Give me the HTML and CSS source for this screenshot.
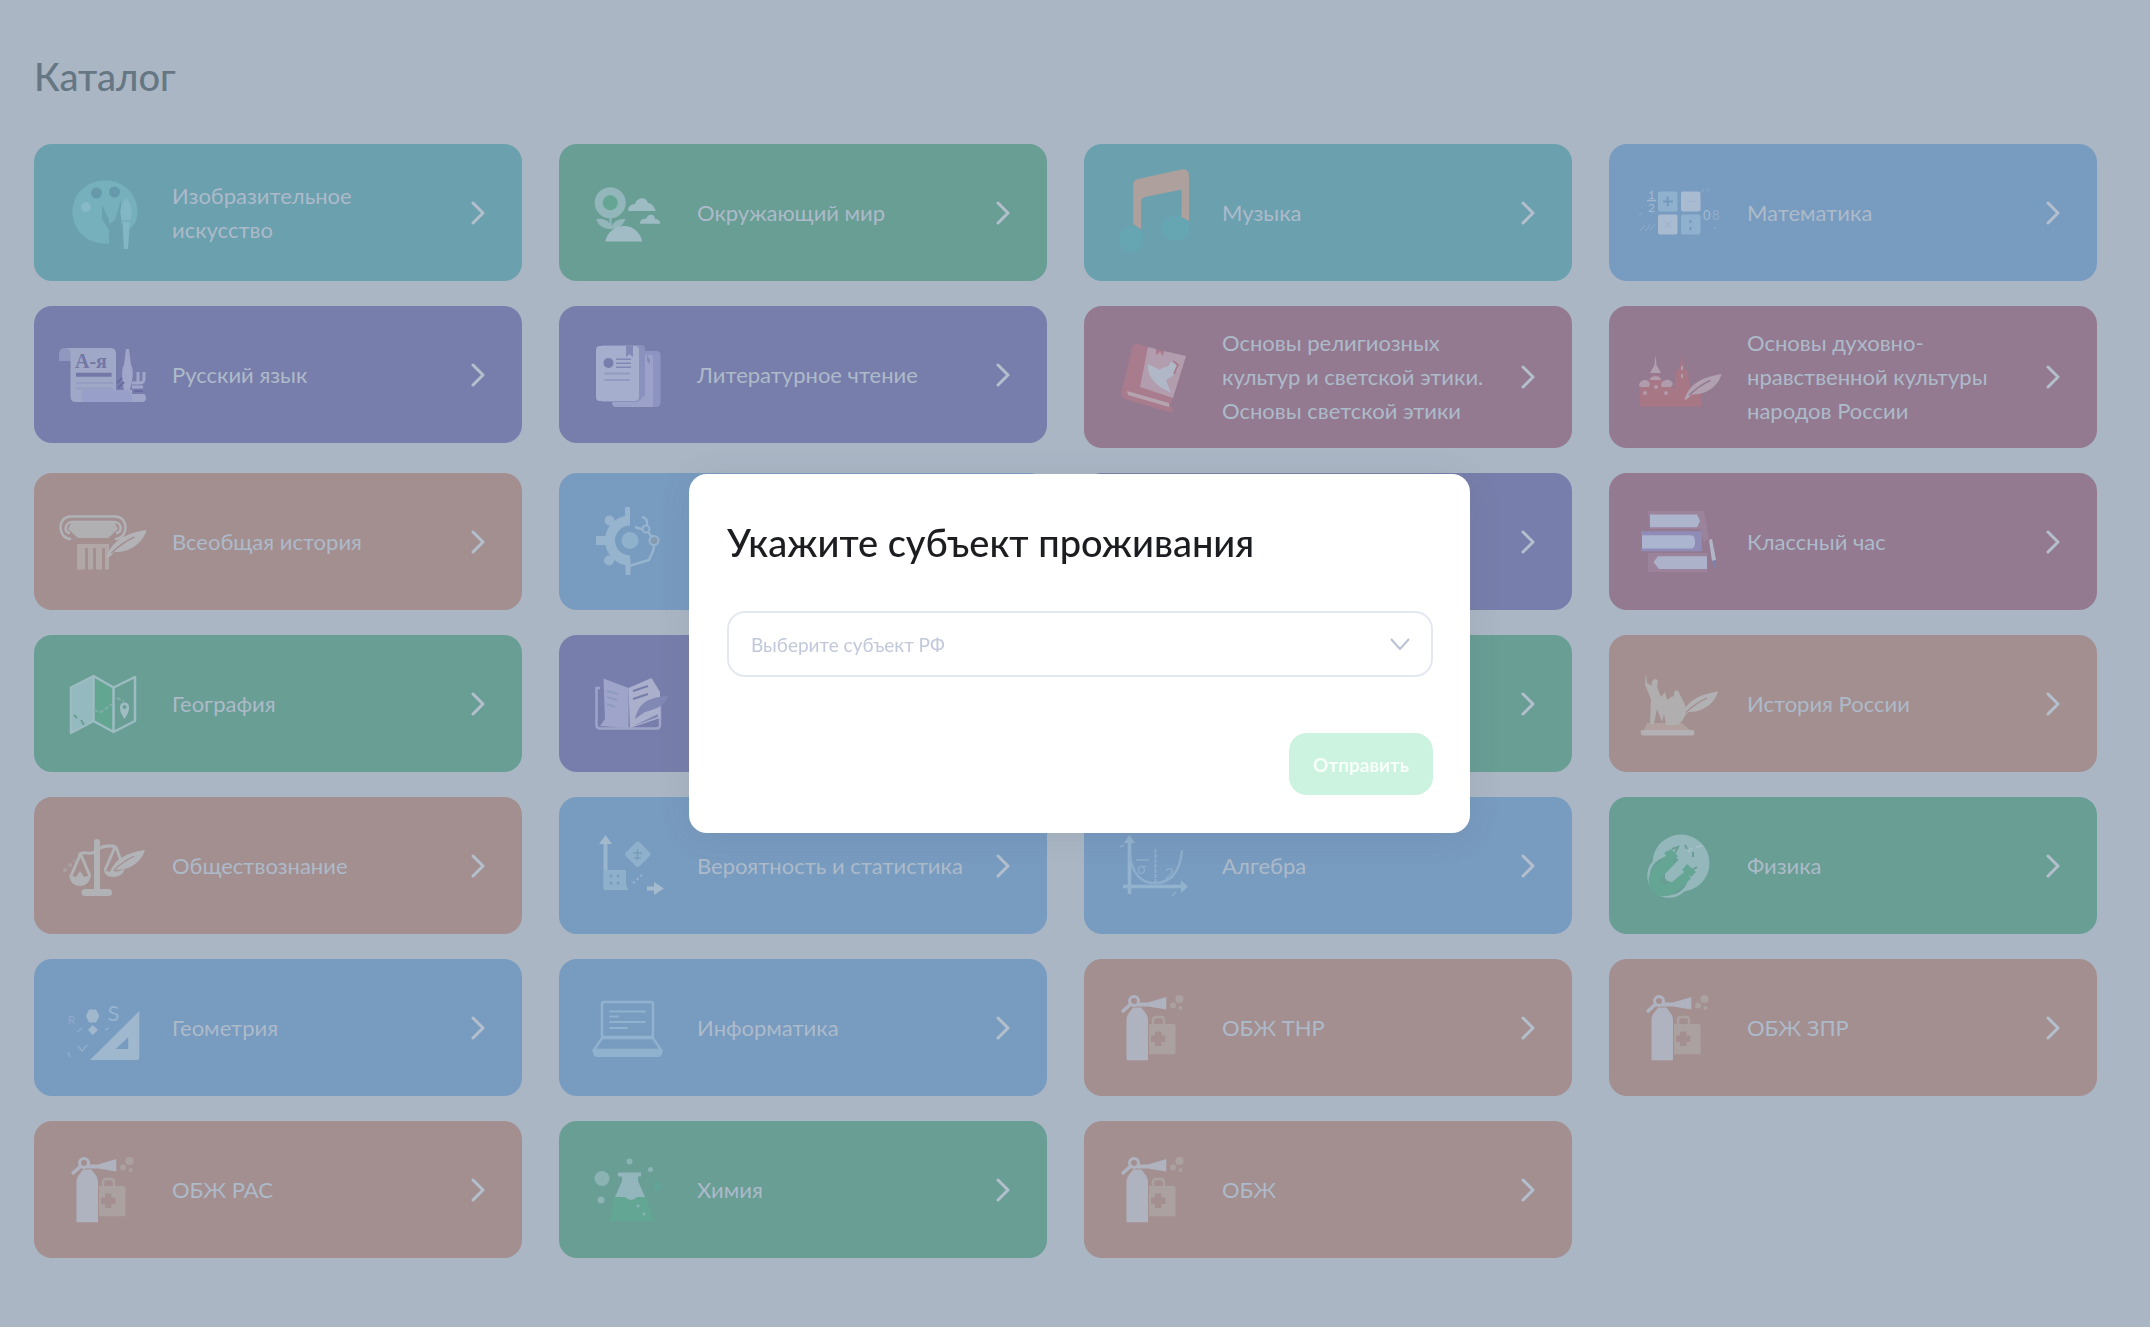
FILE: index.html
```html
<!DOCTYPE html>
<html lang="ru">
<head>
<meta charset="utf-8">
<meta name="viewport" content="width=device-width, initial-scale=1">
<title>Каталог</title>
<link rel="stylesheet" href="styles.css">
</head>
<body>
<svg class="defs" aria-hidden="true">
  <symbol id="next" viewBox="0 0 14 24"><path d="M2 2l10 10L2 22" fill="none" stroke="currentColor" stroke-width="3" stroke-linecap="round" stroke-linejoin="round"/></symbol>
  <symbol id="feather" viewBox="0 0 40 28"><path d="M0 28C4 14 14 4 40 0C37 12 24 23 8 22L3 27Z" fill="currentColor"/><path d="M5 23C12 16 19 11 28 7" fill="none" stroke="var(--tile)" stroke-width="1.5"/></symbol>
  <symbol id="safety" viewBox="0 0 100 100">
    <path d="M23.500 82.300V42C23.500 36 28 33 30 29.500H38.500C40.500 33 45 36 45 42V82.300Z" fill="#aeb3bf"/>
    <circle cx="31" cy="23" r="4.500" fill="none" stroke="#aeb3bf" stroke-width="3"/>
    <path d="M19 34L29 25" stroke="#aeb3bf" stroke-width="3.500"/>
    <path d="M34 24.500H45L63.300 19V31.500L45 28.500H34Z" fill="#aeb3bf"/>
    <g fill="#aba1a1"><circle cx="70" cy="27.500" r="3"/><circle cx="76.500" cy="21" r="4"/><circle cx="77.500" cy="30" r="2"/>
    <path fill-rule="evenodd" d="M46 46H70.500Q72.500 46 72.500 48V76.300H46ZM52 53.500V57.500H48V64H52V68H58.500V64H62.500V57.500H58.500V53.500Z"/></g>
    <path d="M50 46V42Q50 39 53 39H58Q61 39 61 42V46" fill="none" stroke="#aba1a1" stroke-width="2.500"/>
  </symbol>
</svg>

<main class="page">
  <h1 class="page-title">Каталог</h1>
  <nav class="catalog" aria-label="Предметы">
    <a class="tile teal" href="#art">
      <svg class="icon" viewBox="0 0 100 100" aria-hidden="true">
        <path d="M56 80.700C34 82 19.500 67 19.500 49C19.500 30 34 17.400 52 17.400C71 17.400 84.500 31 84.500 49C84.500 57 81 63 76 66L68 60V37L62 57L56 61Z" fill="#76b0bc"/>
        <path d="M49 42L56 57V67L49 56Z" fill="#6ba0ae"/>
        <circle cx="43.500" cy="30" r="5.500" fill="#669aaa"/><circle cx="61.500" cy="29" r="5.500" fill="#669aaa"/><circle cx="33" cy="44" r="5" fill="#87bac6"/>
        <path d="M73 34C79 42 80 50 77 57H69C66 50 67 43 73 34Z" fill="#83b7c6"/><path d="M69.500 59H77L75 86H71Z" fill="#83b7c6"/>
      </svg>
      <span class="label">Изобразительное<br>искусство</span><svg class="next" aria-hidden="true"><use href="#next"/></svg>
    </a>
    <a class="tile green" href="#world">
      <svg class="icon" viewBox="0 0 100 100" aria-hidden="true">
        <circle cx="32.200" cy="39.700" r="11.500" fill="#64a593" stroke="#93b6bb" stroke-width="8"/>
        <path d="M32.500 54V66M32 65C27 65 21 62 19.500 57C26 56 31 59 32 65ZM34 65C36 59 40 57 46 57C44 62 40 65 34 65Z" fill="#93b6bb" stroke="#93b6bb" stroke-width="2"/>
        <path d="M27.400 78.400C29 69 37 63 46 63C55 63 62 69 64.300 78.400Z" fill="#a1bcc5"/>
        <path d="M50 48C50 42 55 41 57 41C59 34 68 33 70 40C74 40 76 44 78 48ZM62 60.700C62 56 66 55 68 56C70 50 77 51 77 56C80 56 82 58 82.500 60.700Z" fill="#9dbbc2"/>
      </svg>
      <span class="label">Окружающий мир</span><svg class="next" aria-hidden="true"><use href="#next"/></svg>
    </a>
    <a class="tile teal" href="#music">
      <svg class="icon" viewBox="0 0 100 100" aria-hidden="true">
        <ellipse cx="28" cy="76" rx="12.500" ry="13" fill="#66a5b2"/><ellipse cx="72.500" cy="65" rx="14" ry="13" fill="#66a5b2"/>
        <path d="M30.300 61V21Q30.300 17 35 16L78 6.500Q86 5 86 13V58L78.600 54V26.400L42 34Q38 35 38 39V66.500Z" fill="#aea09d"/>
      </svg>
      <span class="label">Музыка</span><svg class="next" aria-hidden="true"><use href="#next"/></svg>
    </a>
    <a class="tile blue" href="#math">
      <svg class="icon" viewBox="0 0 100 100" aria-hidden="true">
        <g fill="#8fb1cd"><rect x="30" y="28.500" width="19.500" height="20" rx="2"/><rect x="53" y="51.500" width="19.500" height="20" rx="2"/></g>
        <g fill="#a9bbd0"><rect x="53" y="28.500" width="19.500" height="20" rx="2"/><rect x="30" y="51.500" width="19.500" height="20" rx="2"/></g>
        <path d="M35 38.500H45M39.700 33.500V43.500M62.500 57V60M62.500 64V67" stroke="#7499bd" stroke-width="2"/>
        <path d="M59 38.500H67M36.500 58L43 65M43 58L36.500 65" stroke="#9fb5cd" stroke-width="1.500"/>
        <path d="M19 37.500H28" stroke="#a3b9d0" stroke-width="1.500"/>
        <path d="M12 68L17 62M17 68L22 62M22 67L27 61M74 29L76 26M79 28L81 25M11 52L14 50M86 66L88 64" stroke="#8eaccb" stroke-width="1"/>
        <g class="glyph" fill="#a3b9d0"><text x="20" y="36" font-size="12">1</text><text x="20" y="49" font-size="12">2</text><text x="75" y="57" font-size="13">0</text><text x="84" y="57" font-size="13" opacity=".6">8</text></g>
      </svg>
      <span class="label">Математика</span><svg class="next" aria-hidden="true"><use href="#next"/></svg>
    </a>

    <a class="tile violet" href="#russian">
      <svg class="icon" viewBox="0 0 100 100" aria-hidden="true">
        <path d="M6 36V29Q6 23 12 23H22V36Z" fill="#9098bf"/>
        <path d="M13 23H58Q63 23 63 29V65H79V77H23Q17.500 77 17.500 71V29Q17.500 24 13 23Z" fill="#a0a8c7"/>
        <path d="M28.500 65H74Q79 65 79 77H28.500Z" fill="#989fc8"/>
        <text class="slavic" x="22" y="43" font-size="20" fill="#7378a6">А-я</text>
        <path d="M23 49.700H58.500" stroke="#7378a6" stroke-width="4"/><path d="M23 58H60M23 63.500H60" stroke="#959dc3" stroke-width="2"/>
        <path d="M73 24H76L78 40C81 44 80 54 77 65H71C69 54 68 44 71 40Z" fill="#9fa6c9"/>
        <path d="M85 47V57M91 47V54Q91 58 86 58H79M79 62H90" fill="none" stroke="#9fa6c9" stroke-width="3"/>
        <path d="M79 69H90Q93 69 93 73Q93 77 89 77H79Z" fill="#9fa6c9"/>
        <path d="M64 58L69 53M65 63L71 57M81 66H90" stroke="#686ca0" stroke-width="2"/>
      </svg>
      <span class="label">Русский язык</span><svg class="next" aria-hidden="true"><use href="#next"/></svg>
    </a>
    <a class="tile violet" href="#reading">
      <svg class="icon" viewBox="0 0 100 100" aria-hidden="true">
        <path d="M34 26H78Q82.500 26 82.500 30V77Q82.500 82 78 82H38Q34 82 34 77Z" fill="#8d94c1"/><path d="M37 30H75V82H38Q34 82 34 77Z" fill="#9ba1c9"/>
        <path d="M24 20H63Q67 20 67 24V70L60 77H24Z" fill="#8b91bd"/>
        <rect x="18" y="21" width="43" height="55" rx="4" fill="#a6aecd"/>
        <circle cx="30.500" cy="38" r="5" fill="#777eac"/><path d="M48 21H55V32L51.500 29L48 32ZM69 30L72 35V39L69 36Z" fill="#8289b4"/>
        <path d="M38 34.300H53M38 38.300H53M38 42.300H53" stroke="#8188b4" stroke-width="1.500"/><path d="M26.500 48.500H52M26.500 55H52" stroke="#929ac0" stroke-width="2"/>
      </svg>
      <span class="label">Литературное чтение</span><svg class="next" aria-hidden="true"><use href="#next"/></svg>
    </a>
    <a class="tile plum" href="#religion">
      <svg class="icon" viewBox="0 0 100 100" aria-hidden="true">
        <path d="M34 17Q30 17 29 21L18.500 65Q18 71 22 72L69 86L70 81L67 79L83 30Z" fill="#a97c8d"/>
        <path d="M45 20L53 22L53 28L57 25L60 29L61 24L83 29L70 71L37 60Z" fill="#b19dae"/>
        <path d="M24 64L66 76V80L25 68Z" fill="#b5a3b0"/>
        <path d="M45 37L57 43C60 39 67 41 67 36C69 33 73 34 73 37L76 39C74 48 67 50 63 53L68 66L57 60C48 53 44 45 45 37Z" fill="#b0b8c8"/>
        <path d="M70 34L75 38L71 47" fill="none" stroke="#a97c8d" stroke-width="2"/>
      </svg>
      <span class="label">Основы религиозных<br>культур и светской этики.<br>Основы светской этики</span><svg class="next" aria-hidden="true"><use href="#next"/></svg>
    </a>
    <a class="tile plum" href="#culture">
      <svg class="icon" viewBox="0 0 100 100" aria-hidden="true">
        <path d="M12 79.500V62L20 55L24 48H31L35 55L46 61V66L48 45L52 40L54 27L56 40L60 45L62 67H73V79.500Z" fill="#a87785"/>
        <path d="M27.500 28L28.500 38L33 46H22L26.500 38Z" fill="#b0a0b0"/>
        <g fill="#b19cab"><path d="M11 59C11 53 20 50 22 57L21 60H12ZM33 59C33 52 43 50 45 57L43 60H34ZM22 53C22 48 33 48 33 53Z"/><circle cx="17" cy="66" r="2"/><circle cx="38" cy="66" r="2"/><circle cx="28" cy="60" r="2"/><rect x="53" y="39" width="2" height="4"/><rect x="53" y="47" width="2" height="4"/></g>
        <use href="#feather" x="56" y="47" width="38" height="26" color="#b1a0af"/>
      </svg>
      <span class="label">Основы духовно-<br>нравственной культуры<br>народов России</span><svg class="next" aria-hidden="true"><use href="#next"/></svg>
    </a>

    <a class="tile rose" href="#world-history">
      <svg class="icon" viewBox="0 0 100 100" aria-hidden="true">
        <path d="M24 52H56V77.500H52V56H49V77.500H43V56H40V77.500H35V56H32V77.500H24Z" fill="#b0a7a6"/>
        <path d="M18 47C4 47 4 24 18 24.500H62C76 24 76 47 62 47M17 41C10 41 12 30 19 30H61C69 30 70 41 63 41" fill="none" stroke="#b0b2b7" stroke-width="2.500"/>
        <path d="M18 31H62L65 37L55 46H25L15 37Z" fill="#b0afb1"/>
        <use href="#feather" x="53" y="38" width="41" height="28" color="#b2b2b7"/>
      </svg>
      <span class="label">Всеобщая история</span><svg class="next" aria-hidden="true"><use href="#next"/></svg>
    </a>
    <a class="tile blue" href="#technology">
      <svg class="icon" viewBox="0 0 100 100" aria-hidden="true">
        <path d="M52 28.500A20 20 0 0 0 52 68.500" fill="none" stroke="#97b4ce" stroke-width="10"/>
        <path d="M49.500 15V30M32 30L39 37M32 67L39 60M50 67V83" stroke="#97b4ce" stroke-width="5"/>
        <circle cx="31.500" cy="28.500" r="5" fill="#97b4ce"/><circle cx="31" cy="68.500" r="5" fill="#97b4ce"/><path d="M18 44H34V53H18Z" fill="#97b4ce"/>
        <circle cx="52" cy="48.500" r="8.500" fill="#8fb1cc"/>
        <path d="M51 74L71 68L75 59L76 54M57 35L66 38M64 25Q70 26 69 33M70 40L74 45" fill="none" stroke="#97b4ce" stroke-width="2.500"/>
        <circle cx="68" cy="37" r="3.500" fill="#789bc0" stroke="#97b4ce" stroke-width="2"/><circle cx="76" cy="48.500" r="4.500" fill="#849bb0" stroke="#97b4ce" stroke-width="2"/>
      </svg>
      <span class="label"></span><svg class="next" aria-hidden="true"><use href="#next"/></svg>
    </a>
    <a class="tile violet" href="#language"><span class="icon"></span><span class="label"></span><svg class="next" aria-hidden="true"><use href="#next"/></svg></a>
    <a class="tile plum" href="#class-hour">
      <svg class="icon" viewBox="0 0 100 100" aria-hidden="true">
        <path d="M20 19H76L81 47L76 50L72 37H22ZM20 61H79V80H20Z" fill="#9c839c"/>
        <path d="M22 22.600H69L72 29L69 35.300H22Z" fill="#acb5cc"/>
        <path d="M13 39.300H73.800V59.300H13V56.600H14V43.300H13Z" fill="#8f8db8"/><path d="M14 43.300H63Q67 43.300 67 50T63 56.600H14Z" fill="#acb5cf"/>
        <path d="M79 64.300H30L25.500 70L31 77H79Z" fill="#acb2c9"/>
        <path d="M81 48L84 47L88 68L84 69Z" fill="#b0b7c8"/><path d="M84 69L88 68V79Z" fill="#7d80ac"/>
      </svg>
      <span class="label">Классный час</span><svg class="next" aria-hidden="true"><use href="#next"/></svg>
    </a>

    <a class="tile green" href="#geography">
      <svg class="icon" viewBox="0 0 100 100" aria-hidden="true">
        <path d="M40.500 22L60.500 33.500V78L40.500 67Z" fill="#62a692"/>
        <path d="M18 33.500L40.500 22V67L18 79Z" fill="#94b9be"/>
        <path d="M18 33.500L40.500 22L60.500 33.500L82 23V67L60.500 78L40.500 67L18 79ZM40.500 22V67M60.500 33.500V78" fill="none" stroke="#9dbcc2" stroke-width="2.500" stroke-linejoin="round"/>
        <path d="M21 61L24 64M28 66L31 71" stroke="#689e94" stroke-width="2"/><path d="M41 56L48 58L54 54L59 50M64 44L71 47" fill="none" stroke="#82afa9" stroke-width="2" stroke-dasharray="4 2"/>
        <path fill-rule="evenodd" d="M71.500 65C67 58 67 56 67 53A4.500 4.500 0 0 1 76 53C76 56 76 58 71.500 65ZM71.500 51A2 2 0 1 0 71.500 55A2 2 0 1 0 71.500 51Z" fill="#a0bdc4"/>
      </svg>
      <span class="label">География</span><svg class="next" aria-hidden="true"><use href="#next"/></svg>
    </a>
    <a class="tile violet" href="#literature">
      <svg class="icon" viewBox="0 0 100 100" aria-hidden="true">
        <path d="M22 34H18.500V71Q18.500 74.500 22 74.500H78Q82 74.500 82 71V44" fill="none" stroke="#9da4c8" stroke-width="2.500"/>
        <path d="M25.500 24.500L50.500 34V74L22 72L27 65Z" fill="#9fa5ca"/><path d="M50.500 34L73.500 24L82 38V64L52 74Z" fill="#aab0cc"/>
        <path d="M29 37L40 40M29 43L39 46M29 50L37 53" stroke="#9099c0" stroke-width="2"/><path d="M55 37L70 32M55 45L70 40" stroke="#777dab" stroke-width="2"/>
        <path d="M57 65C60 52 67 43 90 42C88 50 80 55 67 58ZM55 72L80 60V63Z" fill="#8188b3"/>
      </svg>
      <span class="label"></span><svg class="next" aria-hidden="true"><use href="#next"/></svg>
    </a>
    <a class="tile green" href="#biology"><span class="icon"></span><span class="label"></span><svg class="next" aria-hidden="true"><use href="#next"/></svg></a>
    <a class="tile rose" href="#russian-history">
      <svg class="icon" viewBox="0 0 100 100" aria-hidden="true">
        <path d="M12.700 77Q12.700 76 15 76H64Q66.500 76 66.500 79T64 81.500H15Q12.700 81.500 12.700 77Z" fill="#b2b0b2"/>
        <path d="M19 69H54L62 76H16Z" fill="#b0a19f"/>
        <path d="M18 19L19 29L24 32C22 26 29 22 30 28L29 33L33 43L37 38L39 46L43 43L46 42C45 35 51 34 52 41L56 48L59 57L55 66L50 71H38L36 60L34 68L29 55L26 70H22L23 45L17 31Z" fill="#b0aeae"/>
        <use href="#feather" x="53" y="37" width="37" height="27" color="#b1b0b2"/>
      </svg>
      <span class="label">История России</span><svg class="next" aria-hidden="true"><use href="#next"/></svg>
    </a>

    <a class="tile rose" href="#society">
      <svg class="icon" viewBox="0 0 100 100" aria-hidden="true">
        <path d="M44 26V75" stroke="#b0b2b5" stroke-width="6" stroke-linecap="round"/><rect x="28.500" y="73" width="30.500" height="7" rx="3.500" fill="#b0b2b5"/>
        <path d="M26 39Q28 36 34 37Q42 38 45 33Q54 28 63 31M27 39L18 60M28 39L37 60M62 31L52 54M63 31L68 45" fill="none" stroke="#b0b2b5" stroke-width="3"/>
        <path d="M16 59L23 61L27 55L31 61L38 59C37 66 33 70 27 70S17 66 16 59ZM51 53Q56 59 72 53Q69 61 60 61T51 53Z" fill="#b0b2b5"/>
        <g fill="#aba1a2"><circle cx="12" cy="54" r="2"/><circle cx="17" cy="49" r="2"/><circle cx="21" cy="45" r="1"/></g>
        <use href="#feather" x="56" y="34" width="36" height="25" color="#b2b3b6"/>
      </svg>
      <span class="label">Обществознание</span><svg class="next" aria-hidden="true"><use href="#next"/></svg>
    </a>
    <a class="tile blue" href="#statistics">
      <svg class="icon" viewBox="0 0 100 100" aria-hidden="true">
        <path d="M27.500 24V73" stroke="#9ab5ce" stroke-width="4"/><path d="M27.500 19L34 28H21ZM76 66L86 72.500L76 79Z" fill="#a3bacd"/><path d="M69 72.500H78" stroke="#a3bacd" stroke-width="4"/>
        <path d="M26 54H48V68L50 74H26Z" fill="#8fb0ca"/><rect x="50" y="28.500" width="19.500" height="19.500" rx="3" transform="rotate(45 59.750 38.250)" fill="#8fb0ca"/>
        <path d="M55 37H64M59.500 33V44M56 42H63" stroke="#769bbd" stroke-width="1.500"/>
        <g fill="#769bbd"><circle cx="33" cy="60" r="1.500"/><circle cx="40" cy="60" r="1.500"/><circle cx="33" cy="67" r="1.500"/><circle cx="40" cy="67" r="1.500"/></g>
        <path d="M55 67L66 57" stroke="#9ab5ce" stroke-width="2" stroke-dasharray="2 3"/>
      </svg>
      <span class="label">Вероятность и статистика</span><svg class="next" aria-hidden="true"><use href="#next"/></svg>
    </a>
    <a class="tile blue" href="#algebra">
      <svg class="icon" viewBox="0 0 100 100" aria-hidden="true">
        <path d="M26.500 24V78M20 70.500H80" stroke="#92b2ce" stroke-width="3.500"/><path d="M26.500 19L32 27H21ZM78 64.500L85 70.500L78 77Z" fill="#92b2ce"/>
        <path d="M27 38C29 60 40 67 52 67S77 60 79 34" fill="none" stroke="#8eaecc" stroke-width="2.500"/>
        <path d="M52.500 33V66" stroke="#8eaecc" stroke-width="2" stroke-dasharray="4 1"/>
        <path d="M33 44H46M69 80L73 76M17 31L21 29" stroke="#8eaecc" stroke-width="1.500"/>
        <g class="glyph" fill="#8eaecc"><text x="34" y="58" font-size="15">σ</text><text x="62" y="63" font-size="15">2</text></g>
      </svg>
      <span class="label">Алгебра</span><svg class="next" aria-hidden="true"><use href="#next"/></svg>
    </a>
    <a class="tile green" href="#physics">
      <svg class="icon" viewBox="0 0 100 100" aria-hidden="true">
        <circle cx="53" cy="47" r="28.500" fill="#94b7bc"/><circle cx="41" cy="60" r="20.500" fill="#689e94" stroke="#94b7bc" stroke-width="2.500"/>
        <path d="M43 43L31 55C19 68 34 81 46 70L59 58" fill="none" stroke="#64a593" stroke-width="12"/>
        <path d="M37 58L57 37L66 48L44 66Q36 66 37 58Z" fill="#94b7bc"/><path d="M36 37L43 33L50 40L45 46ZM59 48L68 56L63 61L54 54Z" fill="#64a593"/>
        <path d="M44 33L50 31L47 37M57 29L59 33M65 36V41M64 54L69 51" fill="none" stroke="#689e94" stroke-width="2"/>
        <path d="M60 36L64 32M68 31L74 30" stroke="#a9c2cb" stroke-width="1.500"/>
      </svg>
      <span class="label">Физика</span><svg class="next" aria-hidden="true"><use href="#next"/></svg>
    </a>

    <a class="tile blue" href="#geometry">
      <svg class="icon" viewBox="0 0 100 100" aria-hidden="true">
        <path fill-rule="evenodd" d="M37 82L86.300 33V79.500Q86.300 82 84 82ZM62.700 71H75.200V59.300Z" fill="#a0b8ce"/>
        <path d="M36 31.500H43L46.500 38L43 44.500H36L33 38ZM39.700 47L45 52L39.700 57L35 52Z" fill="#a0b8ce"/>
        <g class="glyph" fill="#97b3cf"><text x="54.500" y="43" font-size="22">S</text><text x="15" y="46" font-size="12" opacity=".7">R</text></g>
        <path d="M15 74L17 79M25 68L29 73L34 67M24 54L29 50M52 52L56 50" stroke="#8fadcc" stroke-width="1.500" fill="none"/>
      </svg>
      <span class="label">Геометрия</span><svg class="next" aria-hidden="true"><use href="#next"/></svg>
    </a>
    <a class="tile blue" href="#informatics">
      <svg class="icon" viewBox="0 0 100 100" aria-hidden="true">
        <rect x="24" y="24" width="51" height="35" rx="2" fill="none" stroke="#90b2ce" stroke-width="2.500"/>
        <path d="M24 60H75L83 72H16Z" fill="none" stroke="#90b2ce" stroke-width="2.500"/><path d="M15 71.500H84.500V74Q84 79 80 79H20Q15 79 15 74Z" fill="#90b2ce"/>
        <path d="M32 33.500H67M32 38.500H40M32 44H67M32 50H49" stroke="#90b2ce" stroke-width="2" stroke-linecap="round"/>
      </svg>
      <span class="label">Информатика</span><svg class="next" aria-hidden="true"><use href="#next"/></svg>
    </a>
    <a class="tile rose" href="#safety-tnr"><svg class="icon" aria-hidden="true"><use href="#safety"/></svg><span class="label">ОБЖ ТНР</span><svg class="next" aria-hidden="true"><use href="#next"/></svg></a>
    <a class="tile rose" href="#safety-zpr"><svg class="icon" aria-hidden="true"><use href="#safety"/></svg><span class="label">ОБЖ ЗПР</span><svg class="next" aria-hidden="true"><use href="#next"/></svg></a>

    <a class="tile rose" href="#safety-ras"><svg class="icon" aria-hidden="true"><use href="#safety"/></svg><span class="label">ОБЖ РАС</span><svg class="next" aria-hidden="true"><use href="#next"/></svg></a>
    <a class="tile green" href="#chemistry">
      <svg class="icon" viewBox="0 0 100 100" aria-hidden="true">
        <path d="M37 56L31.300 81H76.500L67 56Z" fill="#62a693"/>
        <path d="M40 32.500H63V36.500H60V41L67 57L59 57Q53 63 47 57H37L44 41V36.500H40Z" fill="#92b6bb"/>
        <g fill="#8bb3b4"><circle cx="24" cy="38.500" r="7.500"/><circle cx="51.500" cy="21.500" r="3"/><circle cx="72.500" cy="29.500" r="2.500"/><circle cx="23" cy="60" r="3.500"/><circle cx="60" cy="66" r="1.500"/><circle cx="66" cy="74" r="1.500"/></g>
        <circle cx="79.500" cy="46" r="4.500" fill="#62a497"/>
      </svg>
      <span class="label">Химия</span><svg class="next" aria-hidden="true"><use href="#next"/></svg>
    </a>
    <a class="tile rose" href="#safety-general"><svg class="icon" aria-hidden="true"><use href="#safety"/></svg><span class="label">ОБЖ</span><svg class="next" aria-hidden="true"><use href="#next"/></svg></a>
  </nav>
</main>

<div class="overlay">
  <form class="dialog" role="dialog" aria-modal="true" aria-labelledby="dialog-title">
    <h2 class="dialog-title" id="dialog-title">Укажите субъект проживания</h2>
    <div class="field">
      <select class="select" aria-labelledby="dialog-title"><option>Выберите субъект РФ</option></select>
      <svg class="field-arrow" viewBox="0 0 20 12" aria-hidden="true"><path d="M1 1l9 10 9-10" fill="none" stroke="currentColor" stroke-width="2"/></svg>
    </div>
    <button class="submit" type="submit" disabled>Отправить</button>
  </form>
</div>
</body>
</html>
```
FILE: styles.css
```css
* { box-sizing: border-box; }

body {
  margin: 0;
  background: #aab6c4;
  color: #667784;
  font-family: Lato, "Open Sans", sans-serif;
}

.defs { position: absolute; width: 0; height: 0; }

.page { padding: 48px 53px 66px 34px; }

.page-title {
  margin: 0 0 40px;
  font-size: 38px;
  line-height: 56px;
  font-weight: 500;
}

.catalog {
  display: grid;
  grid-template-columns: repeat(4, 1fr);
  gap: 25px 37px;
  align-items: start;
}

.tile {
  display: flex;
  align-items: center;
  gap: 19px;
  min-height: 137px;
  padding: 20px 37px 20px 19px;
  border-radius: 18px;
  background: var(--tile);
  color: #adbac9;
  font-size: 22px;
  line-height: 34px;
  text-decoration: none;
}

.teal { --tile: #6ba0ae; }
.green { --tile: #689e94; }
.blue { --tile: #789bc0; }
.violet { --tile: #787eab; }
.plum { --tile: #937a91; }
.rose { --tile: #a38f90; }

.icon { flex: none; width: 100px; height: 100px; margin: -2px 0; }
.label { flex: 1; white-space: nowrap; }
.next { flex: none; width: 14px; height: 24px; color: #b3bfcd; }
.glyph { font-family: Lato, sans-serif; }
.slavic { font-family: "Liberation Serif", serif; font-weight: 700; }

.overlay {
  position: fixed;
  inset: 0;
  display: flex;
  align-items: center;
  justify-content: center;
  padding: 0 0 20px 9px;
}

.dialog {
  display: flex;
  flex-direction: column;
  width: 781px;
  max-width: 100%;
  padding: 40px 37px 38px 38px;
  border-radius: 18px;
  background: #fff;
  box-shadow: 0 4px 32px rgba(80, 90, 100, .12);
}

.dialog-title {
  margin: 0 0 41px;
  color: #1b1d20;
  font-size: 38px;
  line-height: 56px;
  font-weight: 500;
}

.field { position: relative; }

.select {
  appearance: none;
  width: 100%;
  height: 66px;
  padding: 0 60px 0 22px;
  border: 2px solid #e4e8f0;
  border-radius: 18px;
  background: #fff;
  color: #c1c8da;
  font: inherit;
  font-size: 19px;
}

.field-arrow {
  position: absolute;
  top: 27px;
  right: 23px;
  width: 20px;
  height: 12px;
  color: #b9c1d6;
  pointer-events: none;
}

.submit {
  align-self: flex-end;
  height: 62px;
  margin-top: 56px;
  padding: 0 24px;
  border: 0;
  border-radius: 18px;
  background: #cbf3df;
  color: #f8fffb;
  font: inherit;
  font-size: 19px;
  font-weight: 700;
}
```
